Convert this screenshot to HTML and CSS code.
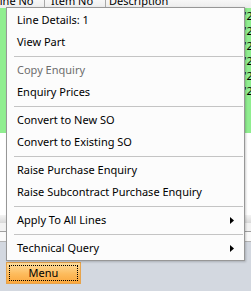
FILE: index.html
```html
<!DOCTYPE html>
<html lang="en">
<head>
  <meta charset="UTF-8" />
  <meta name="viewport" content="width=device-width, initial-scale=1.0"/>
  <title>Enquiry Lines</title>
  <link rel="stylesheet" href="styles.css">
</head>
<body>
  <div class="grid">
    <div class="grid-head">
      <div class="col col-line">Line No</div>
      <div class="col col-item">Item No</div>
      <div class="col col-desc">Description</div>
    </div>

    <div class="grid-rows">
      <div class="row"><span class="cell-end">'2</span></div>
      <div class="row"><span class="cell-end">'2</span></div>
      <div class="row"><span class="cell-end">'2</span></div>
      <div class="row"><span class="cell-end">'2</span></div>
      <div class="row"><span class="cell-end">'2</span></div>
      <div class="row"><span class="cell-end">'2</span></div>
      <div class="row"></div>
      <div class="row"></div>
    </div>

    <div class="grid-empty"></div>

    <div class="grid-foot">
      <div class="foot-band"></div>
      <div class="foot-total"></div>
      <div class="foot-filter"></div>
    </div>
  </div>

  <div class="toolbar">
    <button class="menu-btn" type="button"><span>Menu</span></button>
  </div>

  <!-- Context menu -->
  <ul class="context-menu">
    <li class="menu-item">Line Details: 1</li>
    <li class="menu-item">View Part</li>
    <li class="menu-sep"></li>
    <li class="menu-item disabled">Copy Enquiry</li>
    <li class="menu-item">Enquiry Prices</li>
    <li class="menu-sep"></li>
    <li class="menu-item">Convert to New SO</li>
    <li class="menu-item">Convert to Existing SO</li>
    <li class="menu-sep"></li>
    <li class="menu-item">Raise Purchase Enquiry</li>
    <li class="menu-item">Raise Subcontract Purchase Enquiry</li>
    <li class="menu-sep"></li>
    <li class="menu-item has-sub">Apply To All Lines
      <svg class="sub-arrow" width="4" height="7" viewBox="0 0 4 7"><polygon points="0,0 4,3.5 0,7" fill="#000"/></svg>
    </li>
    <li class="menu-sep"></li>
    <li class="menu-item has-sub">Technical Query
      <svg class="sub-arrow" width="4" height="7" viewBox="0 0 4 7"><polygon points="0,0 4,3.5 0,7" fill="#000"/></svg>
    </li>
  </ul>
</body>
</html>
```

FILE: styles.css
```css
body {
  font-family: 'Segoe UI', 'Noto Sans', sans-serif;
  font-size: 11px;
  background-color: #d3d8e0;
  margin: 0;
  padding: 0;
  width: 251px;
  height: 291px;
  overflow: hidden;
  position: relative;
}

/* Grid behind the menu */
.grid {
  background-color: #fff;
}

.grid-head {
  display: flex;
  height: 8px;
  overflow: hidden;
  background: linear-gradient(#f7f7f7, #ececec);
  margin-left: -7px;
}

.col {
  line-height: 12px;
  margin-top: -5px;
  color: #000;
  white-space: nowrap;
  border-right: 1px solid #a8a8a8;
  box-sizing: border-box;
}

.col-line {
  width: 52px;
  padding-left: 1px;
}

.col-item {
  width: 61px;
  padding-left: 6px;
}

.col-desc {
  flex: 1;
  padding-left: 3px;
  border-right: none;
}

.grid-rows {
  height: 125px;
  background-color: #90ee90;
  overflow: hidden;
}

.row {
  height: 15px;
  position: relative;
}

.cell-end {
  position: absolute;
  left: 244px;
  top: 0;
  line-height: 15px;
  font-size: 11px;
  color: #000;
}

.grid-empty {
  height: 82px;
  background-color: #fff;
}

.foot-band {
  height: 8px;
  background: linear-gradient(#f4f4f4, #d9d9d9);
}

.foot-total {
  height: 8px;
  background-color: #f2f2f2;
  border-bottom: 1px solid #a0a0a0;
}

.foot-filter {
  height: 9px;
  background-color: #fafafa;
  border-bottom: 1px solid #b4b4b4;
}

/* Bottom toolbar */
.toolbar {
  padding: 20px 0 0 6px;
}

.menu-btn {
  width: 75px;
  height: 22px;
  padding: 2px;
  margin: 0;
  border: 1px solid #e6a34c;
  background: linear-gradient(#fedd9c, #fdbb5c 55%, #fba83e);
  font-family: inherit;
  font-size: 11px;
  color: #000;
  box-sizing: border-box;
  cursor: pointer;
}

.menu-btn span {
  display: block;
  height: 100%;
  line-height: 14px;
  border: 1px dotted #000;
  box-sizing: border-box;
}

/* Context menu */
.context-menu {
  position: absolute;
  left: 6px;
  top: 7px;
  width: 239px;
  margin: 0;
  padding: 1px 0;
  list-style: none;
  background-color: #fcfcfc;
  border: 1px solid #979797;
  box-sizing: border-box;
  box-shadow: 1px 1px 2px rgba(0, 0, 0, 0.2);
}

.menu-item {
  display: flex;
  align-items: center;
  justify-content: space-between;
  height: 22px;
  line-height: 22px;
  padding: 0 10px 0 10px;
  color: #000;
  white-space: nowrap;
}

.menu-item.disabled {
  color: #6d6d6d;
}

.sub-arrow {
  display: block;
  margin-right: 0;
}

.menu-sep {
  height: 1px;
  margin: 3px 1px 2px 7px;
  background-color: #c4c4c4;
}
```
